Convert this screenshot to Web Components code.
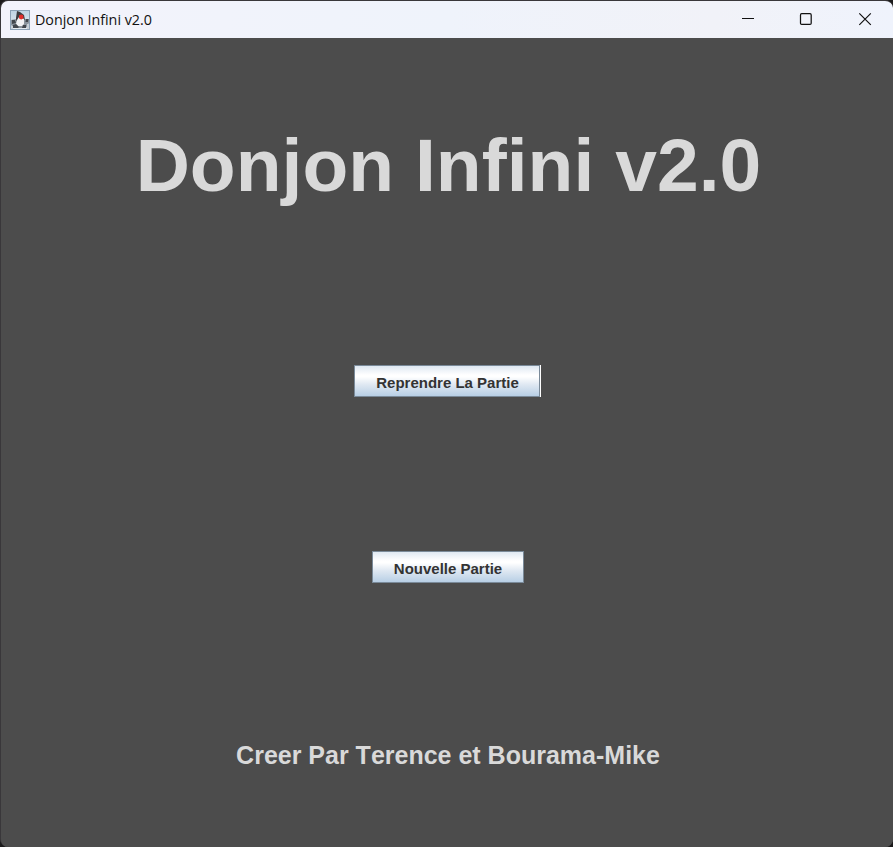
<!DOCTYPE html>
<html lang="fr">
<head>
<meta charset="utf-8">
<title>Donjon Infini v2.0</title>
<style>
html,body{margin:0;height:100%;background:#1b1a1b;overflow:hidden}
body{font-family:"Liberation Sans",Arial,sans-serif}
</style>
</head>
<body>
<game-window>
  <title-bar slot="bar">Donjon Infini v2.0</title-bar>
  <menu-screen>
    <menu-heading>Donjon Infini v2.0</menu-heading>
    <metal-button focused style="--w:187px">Reprendre La Partie</metal-button>
    <metal-button style="--w:152px">Nouvelle Partie</metal-button>
    <menu-credit>Creer Par Terence et Bourama-Mike</menu-credit>
  </menu-screen>
</game-window>
<script>
const define = (name, html) => customElements.define(name, class extends HTMLElement {
  constructor() {
    super();
    this.attachShadow({mode: 'open'}).innerHTML = html;
  }
});

define('game-window', `<style>
:host{display:flex;flex-direction:column;box-sizing:border-box;width:893px;height:847px;border:1px solid #39373a;border-right:0;border-bottom:0;border-radius:8px;overflow:hidden;background:#4c4c4c}
</style><slot name="bar"></slot><slot></slot>`);

define('title-bar', `<style>
:host{display:flex;align-items:center;height:37px;flex:none;background:linear-gradient(90deg,#f3f3fb,#eff3fb 50%,#f1f2f8 80%,#eff3fc);color:#111}
.icon{margin-left:9px;width:20px;height:20px;flex:none}
.text{margin-left:5px;font:14.3px/20px "Open Sans","Noto Sans",sans-serif;letter-spacing:0;font-variant-ligatures:none;white-space:nowrap;flex:1}
.controls{display:flex;flex:none}
.controls svg{width:58.5px;height:37px;display:block}
</style>
<svg class="icon" viewBox="0 0 20 20">
<defs><linearGradient id="g" x2="0" y2="1"><stop stop-color="#bdd3e2"/><stop offset="1" stop-color="#e8eef2"/></linearGradient></defs>
<rect x=".5" y=".5" width="19" height="19" fill="url(#g)" stroke="#8ca2b5"/>
<path d="M1 10 6 9 16 9 19 9 19 13 16 18 4 18 1 15Z" fill="#8b959d"/>
<path d="M7 1 10 2 14 5 15 10 11 7 6 11 6 8Z" fill="#3b3c3f"/>
<path d="M7 10 9 7 14 9 14 14 12 16 8 16 6 14Z" fill="#f1f2f3"/>
<path d="M2 10 5 10 6 13 2 14ZM16 9 18.5 9 18 12 15.5 12ZM3 15 6 14 9 17 8 18H3ZM13 15 16 15 16 18H12Z" fill="#42474c"/>
<path d="M1 16H3V19H1ZM17 14H19V19H17Z" fill="#c8d1d8"/>
<circle cx="11.2" cy="7" r="2.4" fill="#e02d2a"/>
</svg>
<span class="text"><slot></slot></span>
<div class="controls">
<svg viewBox="0 0 58.5 37" fill="none" stroke="#111" stroke-width="1.15"><path d="M24 17.5h12"/></svg>
<svg viewBox="0 0 58.5 37" fill="none" stroke="#111" stroke-width="1.25"><rect x="24.5" y="12.7" width="10.7" height="10.7" rx="1.2"/></svg>
<svg viewBox="0 0 58.5 37" fill="none" stroke="#111" stroke-width="1.2"><path d="m24.3 12.3 11.5 11.5m0-11.5-11.5 11.5"/></svg>
</div>`);

define('menu-screen', `<style>
:host{display:grid;flex:1;grid-template-rows:250px 186px 186px 187px;place-items:center;background:#4c4c4c;box-sizing:border-box;padding-left:1px;font-kerning:none}
</style><slot></slot>`);

define('menu-heading', `<style>
:host{display:block;padding:4px 0 0 2px;font-size:75px;font-weight:bold;line-height:86px;letter-spacing:.04px;color:#d9d9d9;white-space:nowrap;font-variant-ligatures:none}
</style><slot></slot>`);

define('menu-credit', `<style>
:host{display:block;padding:4px 0 0 1px;font-size:25px;font-weight:bold;line-height:29px;color:#d9d9d9;white-space:nowrap}
</style><slot></slot>`);

define('metal-button', `<style>
:host{display:block;box-sizing:border-box;width:var(--w);height:32px}
:host([focused]){border-right:1px solid #fff}
button{display:block;box-sizing:border-box;width:100%;height:100%;margin:0;padding:2px 0 0 1px;border:1px solid #7a8a99;background:linear-gradient(#dfe8f2 0,#fff 30%,#fff 36%,#dfe8f2 62%,#b8cfe5 100%);color:#333;font:bold 15px/17px "Liberation Sans",Arial,sans-serif;font-kerning:none;white-space:nowrap}
</style><button><slot></slot></button>`);
</script>
</body>
</html>
